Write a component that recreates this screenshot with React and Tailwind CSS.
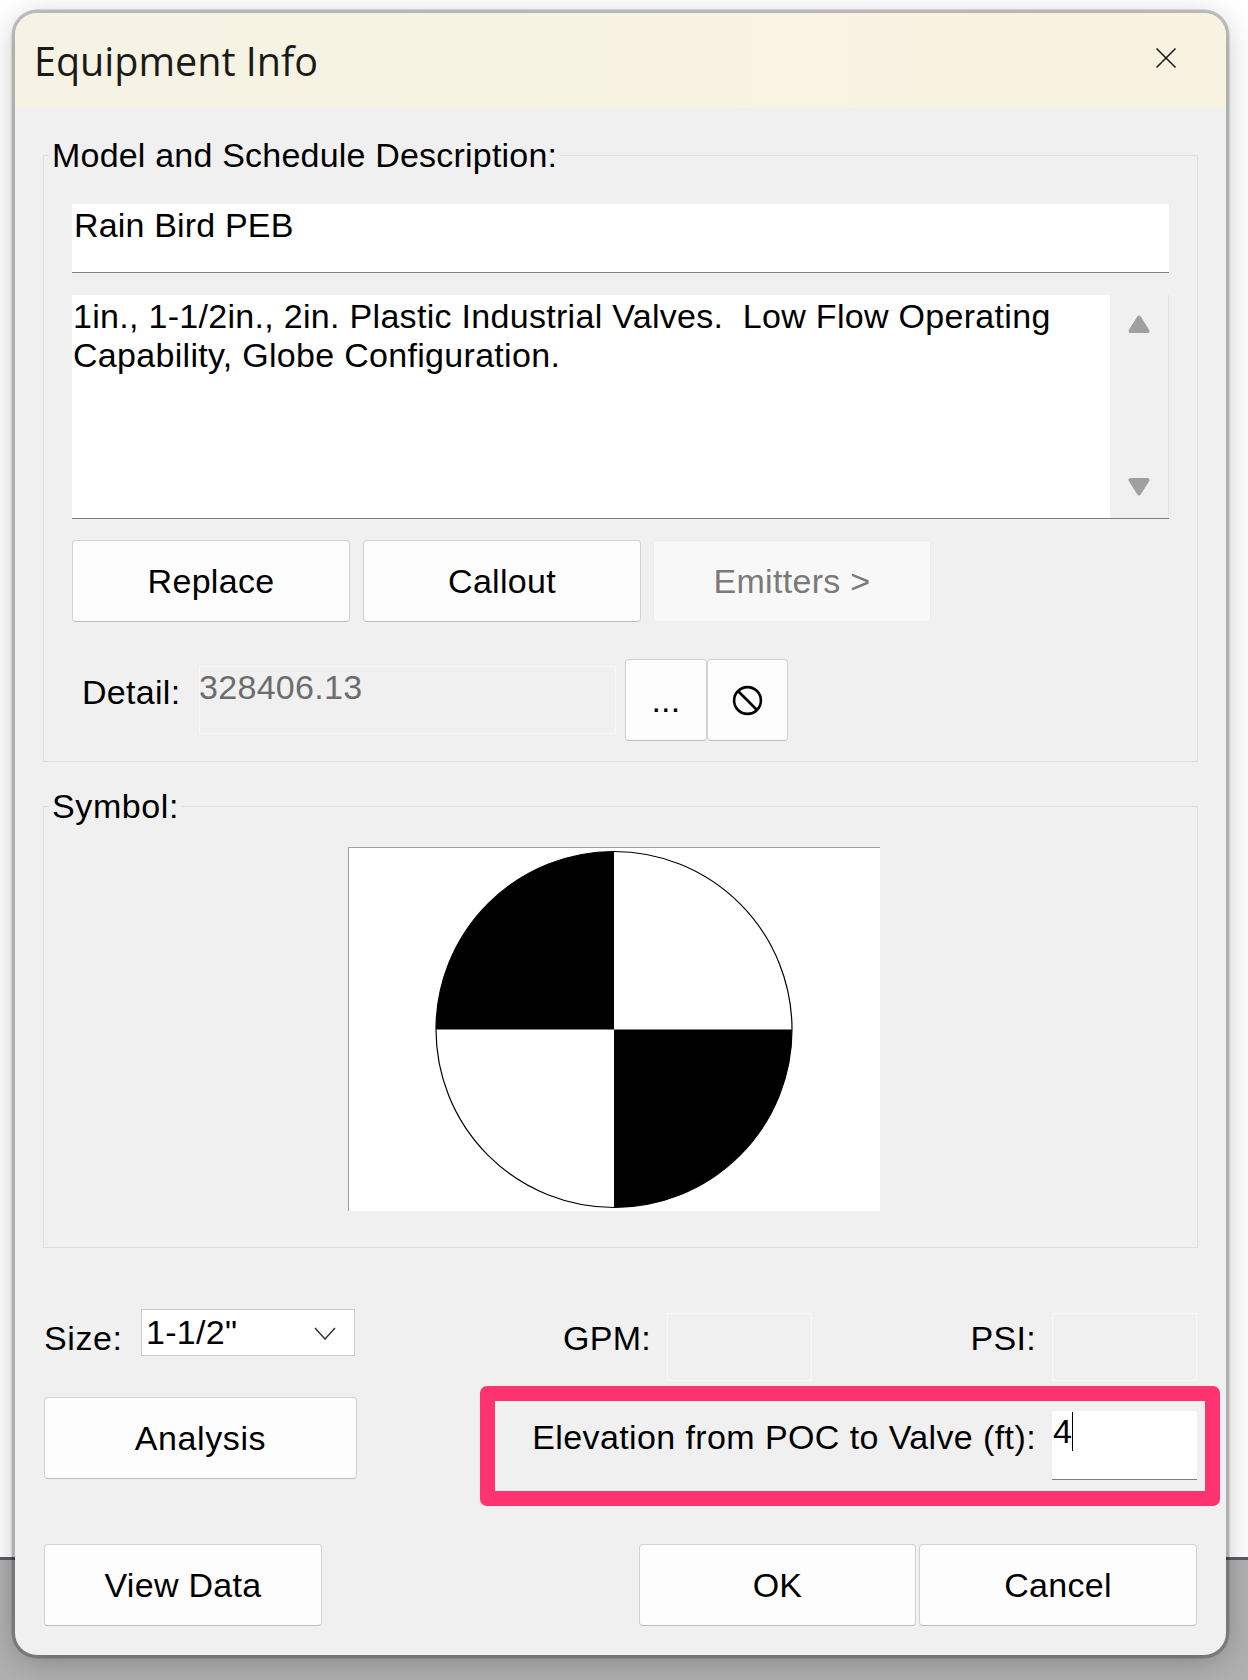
const Btn = ({ label, disabled, className = "w-[278px] h-[82px]" }) => (
  <button
    className={`${className} flex items-center justify-center rounded-[4px] border ${
      disabled
        ? "bg-[#f8f8f8] border-[#ebebeb] text-[#7a7a7a]"
        : "bg-[#fdfdfd] border-[#d2d2d2] border-b-[#bdbdbd] text-black"
    }`}
  >
    {label}
  </button>
);

const Group = ({ title, tracking, children }) => (
  <fieldset className="-mx-[1px] border border-[#dfdfdf]">
    <legend className={`ml-[5px] px-[3px] leading-[38px] ${tracking}`}>{title}</legend>
    {children}
  </fieldset>
);

const ReadOnlyBox = ({ className }) => (
  <div className={`border border-[#f8f8f8] ${className}`} />
);

const Ban = () => (
  <svg width="31" height="31" viewBox="0 0 31 31" fill="none" stroke="#000" strokeWidth="2.6">
    <circle cx="15.5" cy="15.5" r="13.4" />
    <line x1="6" y1="6" x2="25" y2="25" />
  </svg>
);

const Arrow = ({ down }) => (
  <svg width="22" height="18" viewBox="0 0 22 18" fill="#a0a0a0" stroke="#a0a0a0" strokeWidth="4" strokeLinejoin="round">
    {down ? <polygon points="2.5,2 19.5,2 11,15.5" /> : <polygon points="11,2.5 19.5,16 2.5,16" />}
  </svg>
);

const Symbol = () => (
  <svg width="531" height="363" viewBox="0 0 531 363">
    <circle cx="265" cy="181.5" r="178" fill="#fff" stroke="#000" strokeWidth="1.2" />
    <path d="M265 181.5 L265 3.5 A178 178 0 0 0 87 181.5 Z" fill="#000" />
    <path d="M265 181.5 L443 181.5 A178 178 0 0 1 265 359.5 Z" fill="#000" />
  </svg>
);

const App = () => {
  return (
    <div className="relative w-[1248px] h-[1680px] flex flex-col bg-white [font-family:'Liberation_Sans',Arial,sans-serif] text-[34px] leading-[38px] tracking-[0.3px] text-black overflow-hidden">
      <div className="h-[1557px] bg-white" />
      <div className="h-[3px] bg-[#5b5b66]" />
      <div className="flex-1 bg-[#b0b0b0]" />

      <div className="absolute left-[15px] top-[13px] w-[1211px] h-[1642px] rounded-[22px] bg-[#f0f0f0] shadow-[0_0_0_3.5px_rgba(0,0,0,0.22),0_6px_30px_rgba(0,0,0,0.25)] overflow-hidden">
        <div className="h-[95px] bg-linear-to-r from-[#f6f3e4] to-[#f8f2e0] flex items-center justify-between pl-[19px] pr-[49px]">
          <span className="[font-family:'Open_Sans',sans-serif] font-normal text-[39.5px] leading-[50px] tracking-normal text-[#1a1a1a]">
            Equipment Info
          </span>
          <svg width="22" height="22" viewBox="0 0 22 22" stroke="#1a1a1a" strokeWidth="1.6" className="mb-[6px]">
            <line x1="1.5" y1="1.5" x2="20.5" y2="20.5" />
            <line x1="20.5" y1="1.5" x2="1.5" y2="20.5" />
          </svg>
        </div>

        <div className="px-[29px] pt-[28px]">
          <Group title="Model and Schedule Description:" tracking="tracking-[0.2px]">
            <div className="pl-[28px] pr-[28px] pt-[30px] pb-[20px]">
              <div className="h-[69px] bg-white border-b border-[#808080] px-[2px] pt-[2px] tracking-[0.17px]">Rain Bird PEB</div>

              <div className="mt-[22px] h-[224px] flex bg-white border-b border-[#808080]">
                <div className="flex-1 px-[1px] pt-[2px] leading-[39px] whitespace-pre-wrap">
                  {"1in., 1-1/2in., 2in. Plastic Industrial Valves.  Low Flow Operating Capability, Globe Configuration."}
                </div>
                <div className="w-[59px] bg-[#f0f0f0] border-r border-[#e2e2e2] flex flex-col items-center justify-between pt-[20px] pb-[22px]">
                  <Arrow />
                  <Arrow down />
                </div>
              </div>

              <div className="mt-[21px] flex gap-[13px]">
                <Btn label="Replace" />
                <Btn label="Callout" />
                <Btn label="Emitters >" disabled className="-ml-[1px] w-[278px] h-[82px]" />
              </div>

              <div className="mt-[37px] flex items-start">
                <span className="w-[127px] pl-[10px] mt-[14px]">Detail:</span>
                <div className="w-[417px] h-[68px] mt-[7px] border border-[#f8f8f8] pt-[1px] indent-[-1px] text-[#6d6d6d]">328406.13</div>
                <Btn label="..." className="ml-[9px] w-[82px] h-[82px]" />
                <button className="w-[81px] h-[82px] flex items-center justify-center rounded-[4px] border bg-[#fdfdfd] border-[#d2d2d2] border-b-[#bdbdbd]">
                  <Ban />
                </button>
              </div>
            </div>
          </Group>

          <div className="mt-[25px]">
            <Group title="Symbol:" tracking="tracking-[0.6px]">
              <div className="ml-[304px] mt-[22px] mb-[36px] w-[532px] h-[364px] bg-white border-l border-t border-[#a0a0a0]">
                <Symbol />
              </div>
            </Group>
          </div>

          <div className="mt-[61px] flex items-start">
            <span className="w-[97px] mt-[10px] tracking-[0.6px]">Size:</span>
            <div className="w-[214px] h-[47px] bg-white border border-[#cccccc] pl-[4px] pt-[3px] flex justify-between">
              1-1/2"
              <svg width="22" height="13" viewBox="0 0 22 13" fill="none" stroke="#333" strokeWidth="1.5" className="mt-[14px] mr-[18px]">
                <polyline points="1,1 11,12 21,1" />
              </svg>
            </div>
            <span className="ml-[208px] mt-[10px]">GPM:</span>
            <ReadOnlyBox className="ml-[16px] w-[145px] h-[68px] mt-[4px]" />
            <span className="ml-auto mt-[10px]">PSI:</span>
            <ReadOnlyBox className="ml-[16px] w-[145px] h-[68px] mt-[4px]" />
          </div>

          <div className="mt-[5px] flex items-start justify-between -mr-[23px]">
            <Btn label="Analysis" className="mt-[11px] w-[313px] h-[82px] tracking-[0.6px]" />
            <div className="w-[740px] h-[120px] border-[15px] border-[#ff336f] rounded-[7px] flex items-start justify-end pr-[8px]">
              <span className="mt-[17px] tracking-[0.4px]">Elevation from POC to Valve (ft):</span>
              <div className="relative ml-[16px] mt-[10px] w-[145px] h-[69px] bg-white border-b border-[#808080] pl-[1px] pt-[1px] leading-[38px]">
                4
                <span className="absolute left-[20px] top-[1px] w-[1px] h-[39px] bg-black" />
              </div>
            </div>
          </div>

          <div className="mt-[38px] flex justify-between">
            <Btn label="View Data" />
            <div className="flex gap-[3px]">
              <Btn label="OK" className="w-[277px] h-[82px]" />
              <Btn label="Cancel" />
            </div>
          </div>
        </div>
      </div>
    </div>
  );
};

export default App;
